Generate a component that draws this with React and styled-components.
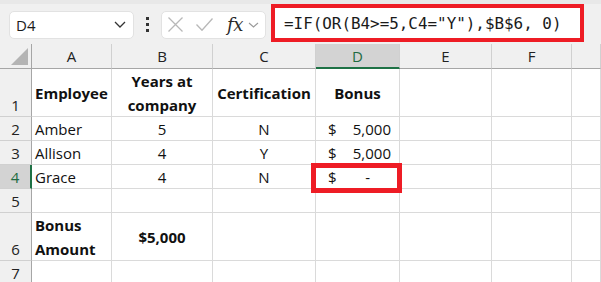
import React from 'react'
import styled, { createGlobalStyle } from 'styled-components'

const GlobalStyle = createGlobalStyle`
  html, body { margin: 0; padding: 0; background: #fff; }
  body { font-family: "Open Sans", "Liberation Sans", sans-serif; }
`

const cols = ['A', 'B', 'C', 'D', 'E', 'F', '']

const rows = [
  { n: 1, tall: true, cells: [
    { text: 'Employee', bold: true, valign: 'center' },
    { text: 'Years at company', bold: true, align: 'center', wrap: true },
    { text: 'Certification', bold: true, align: 'center', valign: 'center' },
    { text: 'Bonus', bold: true, align: 'center', valign: 'center' },
  ] },
  { n: 2, cells: [{ text: 'Amber' }, { text: '5', align: 'center' }, { text: 'N', align: 'center' }, { money: '5,000' }] },
  { n: 3, cells: [{ text: 'Allison' }, { text: '4', align: 'center' }, { text: 'Y', align: 'center' }, { money: '5,000' }] },
  { n: 4, active: true, cells: [{ text: 'Grace' }, { text: '4', align: 'center' }, { text: 'N', align: 'center' }, { money: '-', dash: true }] },
  { n: 5, cells: [] },
  { n: 6, tall: true, cells: [
    { text: 'Bonus Amount', bold: true, wrap: true, narrow: true },
    { text: '$5,000', bold: true, align: 'center', valign: 'center' },
  ] },
  { n: 7, cells: [] },
]

const App = () => {
  return (
    <>
      <GlobalStyle />
      <Page>
        <Toolbar>
          <NameBox>
            <span>D4</span>
            <svg width="12" height="7" viewBox="0 0 12 7">
              <path d="M1 1l5 5 5-5" fill="none" stroke="#333" strokeWidth="1.3" />
            </svg>
          </NameBox>
          <Grip>
            <i /><i /><i />
          </Grip>
          <FxBox>
            <IconSlot $w={15} $gap={13}>
              <svg width="15" height="15" viewBox="0 0 15 15">
                <path d="M0.5 0.5l14 14M14.5 0.5l-14 14" stroke="#b8b8b8" strokeWidth="1.3" fill="none" />
              </svg>
            </IconSlot>
            <IconSlot $w={17} $gap={14}>
              <svg width="17" height="13" viewBox="0 0 17 13">
                <path d="M0.5 6.5l5.5 5.8L16.5 0.5" stroke="#b8b8b8" strokeWidth="1.3" fill="none" />
              </svg>
            </IconSlot>
            <FxLabel>fx</FxLabel>
            <svg width="11" height="6" viewBox="0 0 11 6">
              <path d="M1 1l4.5 4 4.5-4" fill="none" stroke="#999" strokeWidth="1.1" />
            </svg>
          </FxBox>
          <FormulaBar>=IF(OR(B4&gt;=5,C4="Y"),$B$6, 0)</FormulaBar>
        </Toolbar>
        <Sheet>
          <Corner>
            <svg width="17" height="17" viewBox="0 0 17 17">
              <path d="M17 0V17H0Z" fill="#b4b4b4" />
            </svg>
          </Corner>
          {cols.map((c, i) => (
            <ColHead key={i} $active={c === 'D'}>{c}</ColHead>
          ))}
          {rows.map((r) => (
            <React.Fragment key={r.n}>
              <RowHead $active={r.active} $tall={r.tall}>{r.n}</RowHead>
              {cols.map((c, i) => {
                const cell = r.cells[i]
                if (!cell) return <Cell key={i} $tall={r.tall} />
                if (cell.money) {
                  return (
                    <Cell key={i} $tall={r.tall}>
                      <Money $dash={cell.dash}>
                        <span>$</span>
                        <span>{cell.money}</span>
                      </Money>
                      {cell.dash && <Callout />}
                    </Cell>
                  )
                }
                return (
                  <Cell
                    key={i}
                    $tall={r.tall}
                    $bold={cell.bold}
                    $align={cell.align}
                    $valign={cell.valign}
                    $narrow={cell.narrow}
                  >
                    <CellText $wrap={cell.wrap}>{cell.text}</CellText>
                  </Cell>
                )
              })}
            </React.Fragment>
          ))}
        </Sheet>
      </Page>
    </>
  )
}

const Page = styled.div`
  width: 601px;
  height: 282px;
  overflow: hidden;
  background: #fff;
`

const Toolbar = styled.div`
  height: 44px;
  box-sizing: border-box;
  background: #f0f0f0;
  border-top: 4px solid #e8e8e8;
  display: flex;
  align-items: center;
  padding-left: 9px;
`

const NameBox = styled.div`
  width: 125px;
  height: 28px;
  box-sizing: border-box;
  background: #fff;
  border: 1px solid #e2e2e2;
  border-radius: 5px;
  display: flex;
  align-items: center;
  justify-content: space-between;
  padding: 0 7px 0 6px;
  font-size: 15px;
  color: #1a1a1a;
  margin-top: 1px;
`

const Grip = styled.div`
  width: 27px;
  display: flex;
  flex-direction: column;
  align-items: center;
  gap: 3px;
  i {
    display: block;
    width: 3px;
    height: 3px;
    background: #333;
  }
`

const FxBox = styled.div`
  width: 105px;
  height: 28px;
  box-sizing: border-box;
  background: #fff;
  border: 1px solid #e2e2e2;
  border-radius: 5px;
  display: flex;
  align-items: center;
  padding-left: 6px;
  margin-top: 1px;
`

const IconSlot = styled.span`
  display: flex;
  width: ${(p) => p.$w}px;
  margin-right: ${(p) => p.$gap}px;
`

const FxLabel = styled.span`
  font-family: "DejaVu Serif", "Liberation Serif", serif;
  font-style: italic;
  font-size: 18px;
  color: #2a2a2a;
  margin-right: 5px;
  line-height: 1;
  letter-spacing: -0.5px;
`

const FormulaBar = styled.div`
  margin-left: 5px;
  width: 313px;
  height: 38px;
  box-sizing: border-box;
  border: 4px solid #ee1c25;
  background: #fff;
  display: flex;
  align-items: center;
  padding-left: 9px;
  font-family: "DejaVu Sans Mono", "Liberation Mono", monospace;
  font-size: 15.9px;
  color: #1a1a1a;
  white-space: pre;
  margin-top: -2px;
`

const Sheet = styled.div`
  display: grid;
  grid-template-columns: 32px 80px 101px 103px 84px 92px 80px 1fr;
  grid-auto-rows: auto;
  font-size: 15px;
  color: #111;
`

const Corner = styled.div`
  height: 25px;
  box-sizing: border-box;
  background: #f0f0f0;
  border-right: 1px solid #a6a6a6;
  border-bottom: 1px solid #a6a6a6;
  display: flex;
  align-items: flex-end;
  justify-content: flex-end;
  padding: 0 3px 3px 0;
`

const ColHead = styled.div`
  height: 25px;
  box-sizing: border-box;
  background: ${(p) => (p.$active ? '#d3d3d3' : '#f0f0f0')};
  border-right: 1px solid #d0d0d0;
  border-bottom: ${(p) => (p.$active ? '2px solid #1e7145' : '1px solid #a6a6a6')};
  color: ${(p) => (p.$active ? '#1e6b41' : '#222')};
  display: flex;
  align-items: center;
  justify-content: center;
  padding-top: ${(p) => (p.$active ? 1 : 0)}px;
  font-size: 15px;
`

const RowHead = styled.div`
  height: ${(p) => (p.$tall ? 48 : 24)}px;
  box-sizing: border-box;
  background: ${(p) => (p.$active ? '#d3d3d3' : '#f0f0f0')};
  border-right: ${(p) => (p.$active ? '2px solid #1e7145' : '1px solid #a6a6a6')};
  border-bottom: 1px solid #d0d0d0;
  color: ${(p) => (p.$active ? '#1e6b41' : '#222')};
  display: flex;
  align-items: flex-end;
  justify-content: center;
  font-size: 15px;
  line-height: 22px;
`

const Cell = styled.div`
  position: relative;
  height: ${(p) => (p.$tall ? 48 : 24)}px;
  box-sizing: border-box;
  border-right: 1px solid #dadada;
  border-bottom: 1px solid #dadada;
  display: flex;
  align-items: ${(p) => (p.$valign === 'center' ? 'center' : 'flex-end')};
  justify-content: ${(p) => (p.$align === 'center' ? 'center' : 'flex-start')};
  text-align: ${(p) => (p.$align === 'center' ? 'center' : 'left')};
  padding: 0 3px;
  font-weight: ${(p) => (p.$bold ? 700 : 400)};
  line-height: 22px;
  white-space: nowrap;
  ${(p) => p.$narrow && 'padding-right: 20px;'}
`

const CellText = styled.span`
  ${(p) => p.$wrap && `
    white-space: normal;
    line-height: 24px;
    margin-bottom: -1px;
  `}
`

const Money = styled.div`
  flex: 1;
  display: flex;
  justify-content: space-between;
  padding: 0 ${(p) => (p.$dash ? 26 : 5)}px 0 9px;
`

const Callout = styled.div`
  position: absolute;
  z-index: 2;
  left: -5px;
  top: -2px;
  width: 91px;
  height: 30px;
  box-sizing: border-box;
  border: 5px solid #ee1c25;
  pointer-events: none;
`

export default App
